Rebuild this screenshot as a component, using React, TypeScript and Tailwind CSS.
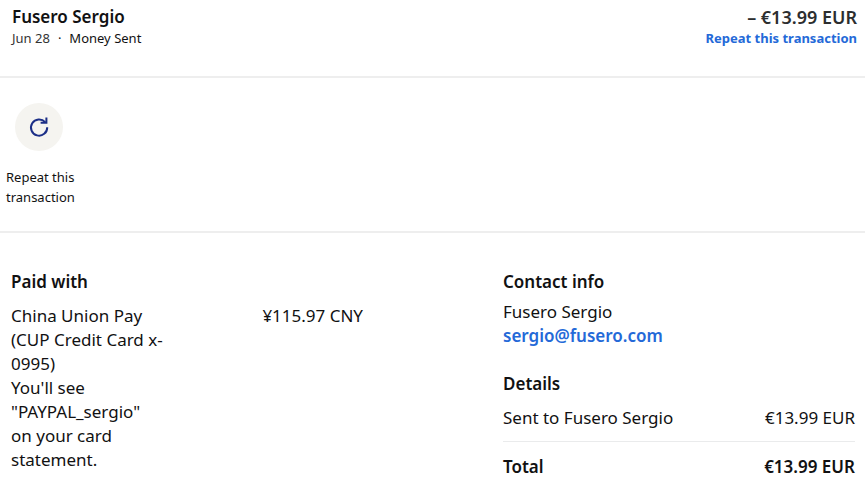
const recipient = 'Fusero Sergio';

function RepeatIcon() {
  return (
    <svg viewBox="0 0 24 24" className="w-6 h-6" fill="none" stroke="#1c2f87" strokeWidth="2" aria-hidden="true">
      <path d="M20.2 12.2A8.1 8.1 0 1 1 18.2 7.2" />
      <path d="M19.4 2.4V7.8H13.6" />
    </svg>
  );
}

function Header() {
  return (
    <header className="flex justify-between h-[78px] pt-1 pl-3 pr-2 border-b-2 border-[#eeeeee]">
      <div>
        <h1 className="text-[17px] leading-[26px] font-semibold">{recipient}</h1>
        <p className="text-[13px] leading-4">
          <span className="text-[#333333]">Jun 28</span>
          <span className="mx-2">·</span>
          Money Sent
        </p>
      </div>
      <div className="text-right">
        <p className="text-[18px] leading-[26px] font-semibold text-[#2c2e2f]">– €13.99 EUR</p>
        <a href="#repeat" className="block text-[13px] leading-4 font-bold text-[#2469d8]">
          Repeat this transaction
        </a>
      </div>
    </header>
  );
}

function Actions() {
  return (
    <section className="h-[155px] pt-[25px] border-b-2 border-[#eeeeee]">
      <button type="button" id="repeat" className="flex flex-col items-center pl-1.5 text-left">
        <span className="flex items-center justify-center w-12 h-12 mr-0.5 rounded-full bg-[#f5f4f0]">
          <RepeatIcon />
        </span>
        <span className="mt-4 text-[13px] leading-5">
          Repeat this
          <br />
          transaction
        </span>
      </button>
    </section>
  );
}

function PaidWith() {
  return (
    <section>
      <h2 className="text-[17px] leading-6 font-semibold">Paid with</h2>
      <div className="flex justify-between mt-2.5 text-[17px] leading-6">
        <p className="w-40">
          China Union Pay (CUP Credit Card x-0995)
          <br />
          You'll see "PAYPAL_sergio" on&nbsp;your card statement.
        </p>
        <p>¥115.97 CNY</p>
      </div>
    </section>
  );
}

function ContactAndDetails() {
  return (
    <section className="text-[17px] leading-6">
      <h2 className="font-semibold">Contact info</h2>
      <p className="mt-1.5">{recipient}</p>
      <a href="mailto:sergio@fusero.com" className="block font-semibold text-[#2469d8]">
        sergio@fusero.com
      </a>

      <h2 className="mt-6 font-semibold">Details</h2>
      <div className="flex justify-between pt-2.5 pb-[11px] border-b border-[#eaebec]">
        <p>Sent to {recipient}</p>
        <p>€13.99 EUR</p>
      </div>
      <div className="flex justify-between pt-[13px] font-semibold">
        <p>Total</p>
        <p>€13.99 EUR</p>
      </div>
    </section>
  );
}

export default function App() {
  return (
    <main className="bg-white text-[#111112] font-['Noto_Sans',sans-serif]">
      <Header />
      <Actions />
      <div className="grid grid-cols-2 gap-[140px] pt-[37px] pl-[11px] pr-2.5">
        <PaidWith />
        <ContactAndDetails />
      </div>
    </main>
  );
}
